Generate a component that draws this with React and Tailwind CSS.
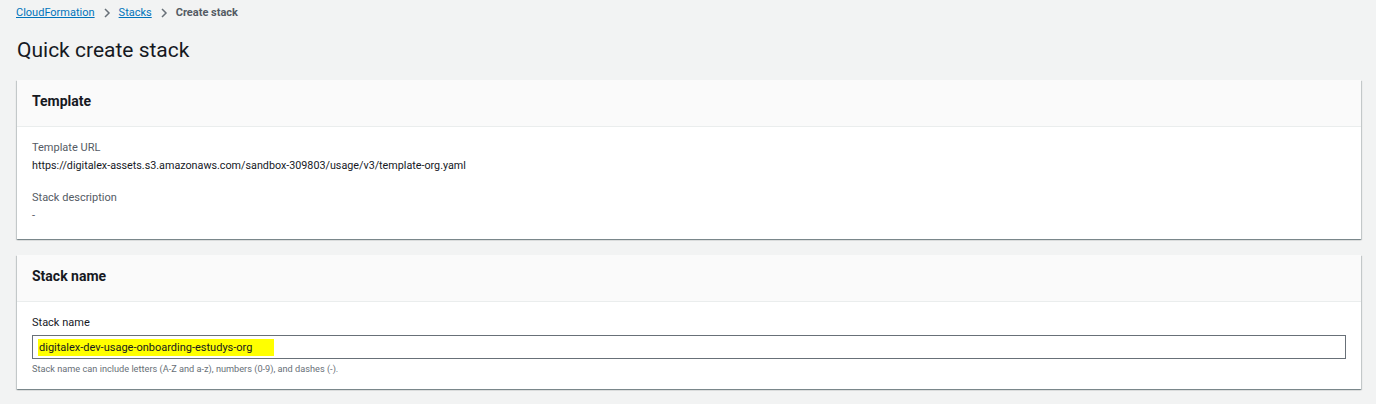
export default function App() {
  const font = { fontFamily: 'Roboto, "Liberation Sans", sans-serif' };

  return (
    <div className="min-h-[404px] bg-[#f2f3f3] pl-[17px] pr-[15px] pt-[5px] text-[#16191f]" style={font}>
      {/* breadcrumb */}
      <nav className="flex items-center gap-[7px] text-[11px] leading-[16px] -ml-px">
        <a className="text-[#0073bb] underline">CloudFormation</a>
        <Chevron />
        <a className="text-[#0073bb] underline">Stacks</a>
        <Chevron />
        <span className="font-bold text-[#545b64]">Create stack</span>
      </nav>

      <h1 className="mt-[17px] text-[21px] leading-[24px] text-[#16191f]">Quick create stack</h1>

      {/* template card */}
      <section className="mt-[18px] bg-white shadow-[0_1px_1px_0_rgba(0,28,36,0.3),1px_1px_1px_0_rgba(0,28,36,0.15),-1px_1px_1px_0_rgba(0,28,36,0.15)]">
        <div className="flex h-[47px] items-center border-b border-[#eaeded] bg-[#fafafa] px-[15px] pb-[3px]">
          <h2 className="text-[14px] font-bold">Template</h2>
        </div>
        <div className="px-[15px] pt-[12px] pb-[14px] text-[11px] leading-[18px]">
          <div className="text-[#545b64]">Template URL</div>
          <div className="text-[10.75px]">https://digitalex-assets.s3.amazonaws.com/sandbox-309803/usage/v3/template-org.yaml</div>
          <div className="mt-[14px] text-[#545b64]">Stack description</div>
          <div className="text-[#545b64]">-</div>
        </div>
      </section>

      {/* stack name card */}
      <section className="mt-[16px] bg-white shadow-[0_1px_1px_0_rgba(0,28,36,0.3),1px_1px_1px_0_rgba(0,28,36,0.15),-1px_1px_1px_0_rgba(0,28,36,0.15)]">
        <div className="flex h-[47px] items-center border-b border-[#eaeded] bg-[#fafafa] px-[15px] pb-[3px]">
          <h2 className="text-[14px] font-bold">Stack name</h2>
        </div>
        <div className="px-[15px] pt-[12px] pb-[13px]">
          <label className="block text-[11px] leading-[18px] text-[#16191f]">Stack name</label>
          <div className="mt-[3px] flex h-[24px] items-center border border-[#687078] bg-white pl-[5px]">
            <span className="bg-[#ffff00] px-[1px] pr-[22px] text-[11px] leading-[17px] text-[#16191f]">
              digitalex-dev-usage-onboarding-estudys-org
            </span>
          </div>
          <p className="mt-[3px] text-[9.2px] leading-[14px] text-[#687078]">
            Stack name can include letters (A-Z and a-z), numbers (0-9), and dashes (-).
          </p>
        </div>
      </section>
    </div>
  );
}

function Chevron() {
  return (
    <svg width="10" height="10" viewBox="0 0 10 10" fill="none" stroke="#687078" strokeWidth="1.5">
      <path d="M3 1l4 4-4 4" />
    </svg>
  );
}
